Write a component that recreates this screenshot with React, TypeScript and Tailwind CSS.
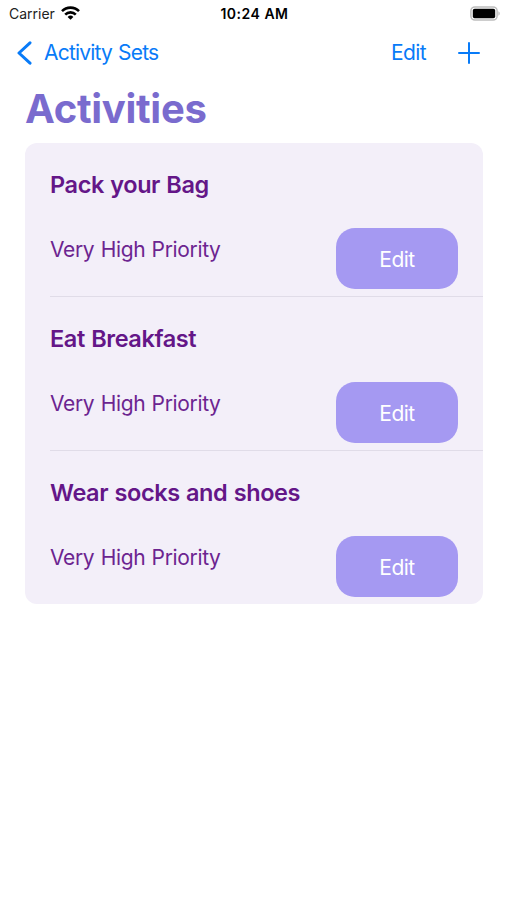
type Activity = {
  name: string;
  priority: string;
};

const activities: Activity[] = [
  { name: "Pack your Bag", priority: "Very High Priority" },
  { name: "Eat Breakfast", priority: "Very High Priority" },
  { name: "Wear socks and shoes", priority: "Very High Priority" },
];

function StatusBar() {
  return (
    <div className="grid h-[27px] grid-cols-3 items-center pl-[9px] pr-[7px] text-[14px] text-black">
      <div className="flex items-center gap-[6px]">
        <span className="text-[#222]">Carrier</span>
        <svg className="-mt-px" width="19" height="14" viewBox="0 0 19 14" fill="none" stroke="currentColor" strokeWidth="2.6">
          <path d="M1 5.2a12 12 0 0 1 17 0" />
          <path d="M4.2 8.6a7.5 7.5 0 0 1 10.6 0" />
          <path d="M9.5 13.8 6.6 10.9a4.1 4.1 0 0 1 5.8 0z" fill="currentColor" stroke="none" />
        </svg>
      </div>
      <span className="text-center font-semibold tracking-[0.5px] whitespace-nowrap">10:24 AM</span>
      <svg className="-mt-px justify-self-end" width="30" height="15" viewBox="0 0 30 15">
        <rect x="0.9" y="0.9" width="26.2" height="13.2" rx="4" fill="none" stroke="#bdbdbd" strokeWidth="1.5" />
        <rect x="2.8" y="2.8" width="22.4" height="9.4" rx="1.8" />
        <path d="M28.4 5.3c1.8.8 1.8 3.6 0 4.400z" fill="#bdbdbd" />
      </svg>
    </div>
  );
}

function NavBar() {
  return (
    <nav className="flex h-[51px] items-center justify-between pl-[17px] pr-[27px] text-[21px] text-[#087bf8]">
      <button className="flex items-center gap-3 tracking-[-0.8px] [word-spacing:1px]">
        <svg width="15" height="24" viewBox="0 0 15 24" fill="none" stroke="currentColor" strokeWidth="3" strokeLinecap="round" strokeLinejoin="round">
          <path d="M13 1.8 2 12l11 10.2" />
        </svg>
        Activity Sets
      </button>
      <div className="flex items-center gap-8">
        <button className="tracking-[-0.6px]">Edit</button>
        <button aria-label="Add">
          <svg width="22" height="22" viewBox="0 0 22 22" fill="none" stroke="currentColor" strokeWidth="2" strokeLinecap="round">
            <path d="M11 1v20M1 11h20" />
          </svg>
        </button>
      </div>
    </nav>
  );
}

function ActivityRow({ name, priority }: Activity) {
  return (
    <li className="group h-[154px] pl-[25px]">
      <div className="flex h-full flex-col border-b border-[#e0dce8] group-last:border-b-0">
        <h2 className="mt-[26px] text-[23.5px] leading-8 font-semibold tracking-[-0.4px] [word-spacing:0.8px]">
          {name}
        </h2>
        <div className="mt-[27px] flex items-start justify-between pr-[25px]">
          <p className="mt-[6px] text-[21px] leading-8 tracking-[-0.35px] text-[#6c2490] [word-spacing:0.8px]">
            {priority}
          </p>
          <button className="h-[61px] w-[122px] rounded-[19px] bg-[#a599f2] pt-[2px] text-[21px] tracking-[-0.5px] text-white">
            Edit
          </button>
        </div>
      </div>
    </li>
  );
}

export default function App() {
  return (
    <main className="min-h-screen bg-white font-['Inter',sans-serif]">
      <StatusBar />
      <NavBar />
      <h1 className="ml-[25px] flex h-[65px] items-center pb-[3px] text-[40px] font-bold tracking-[-0.3px] text-[#7a6bce]">
        Activities
      </h1>
      <ul className="mr-6 ml-[25px] h-[461px] overflow-hidden rounded-[12px] bg-[#f3eff9] text-[#641688]">
        {activities.map((activity) => (
          <ActivityRow key={activity.name} {...activity} />
        ))}
      </ul>
    </main>
  );
}
